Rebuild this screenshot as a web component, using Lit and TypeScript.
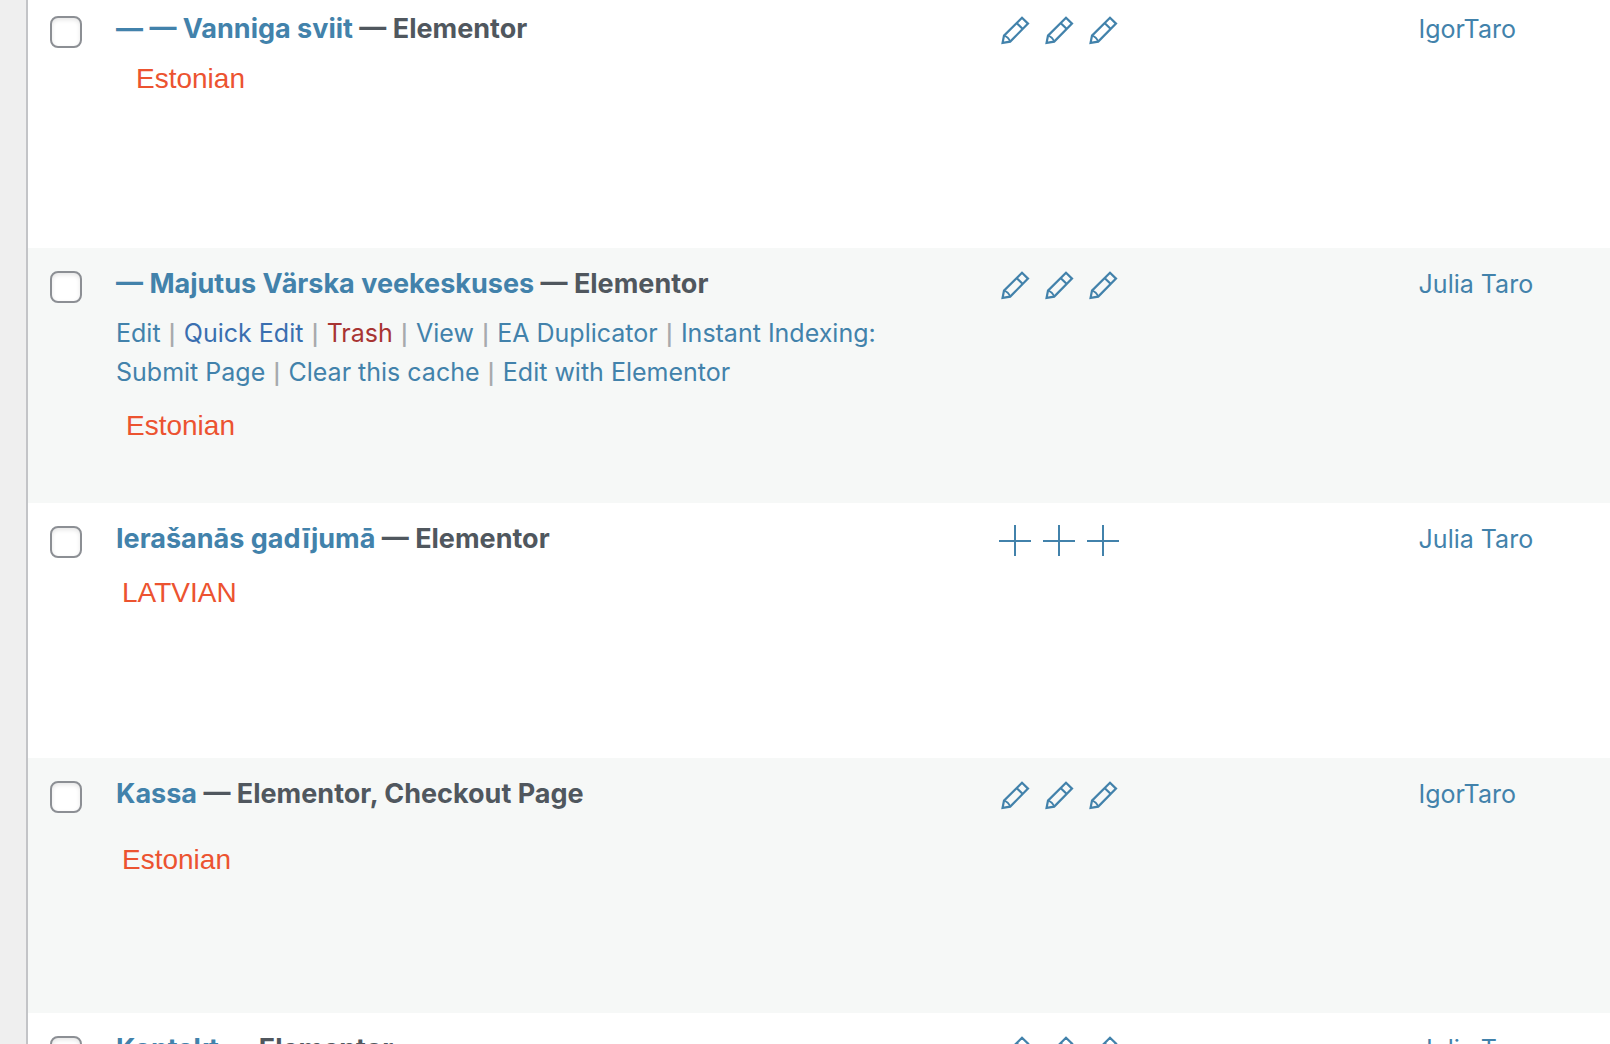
import { LitElement, html, css, svg, nothing } from "lit";
import { customElement, property } from "lit/decorators.js";
import { classMap } from "lit/directives/class-map.js";

type Glyph = "pencil" | "plus";

interface Action {
  label: string;
  kind?: "quick" | "trash";
}

interface PageRow {
  title: string;
  state: string;
  author: string;
  glyph: Glyph;
  actions?: Action[];
  note?: string;
  indent?: "narrow" | "medium" | "wide";
  gap?: "tight" | "normal" | "loose";
}

const ROWS: PageRow[] = [
  {
    title: "— — Vanniga sviit",
    state: "Elementor",
    author: "IgorTaro",
    glyph: "pencil",
    note: "Estonian",
    indent: "wide",
    gap: "tight",
  },
  {
    title: "— Majutus Värska veekeskuses",
    state: "Elementor",
    author: "Julia Taro",
    glyph: "pencil",
    actions: [
      { label: "Edit" },
      { label: "Quick Edit", kind: "quick" },
      { label: "Trash", kind: "trash" },
      { label: "View" },
      { label: "EA Duplicator" },
      { label: "Instant Indexing: Submit Page" },
      { label: "Clear this cache" },
      { label: "Edit with Elementor" },
    ],
    note: "Estonian",
    indent: "medium",
    gap: "normal",
  },
  {
    title: "Ierašanās gadījumā",
    state: "Elementor",
    author: "Julia Taro",
    glyph: "plus",
    note: "LATVIAN",
    indent: "narrow",
    gap: "normal",
  },
  {
    title: "Kassa",
    state: "Elementor, Checkout Page",
    author: "IgorTaro",
    glyph: "pencil",
    note: "Estonian",
    indent: "narrow",
    gap: "loose",
  },
  {
    title: "Kontakt",
    state: "Elementor",
    author: "Julia Taro",
    glyph: "pencil",
  },
];

@customElement("translation-icon")
class TranslationIcon extends LitElement {
  @property() glyph: Glyph = "pencil";

  static styles = css`
    :host {
      display: block;
      width: 32px;
      height: 32px;
    }
    .icon {
      display: block;
      width: 100%;
      height: 100%;
      fill: none;
      stroke: currentColor;
      stroke-width: 2;
    }
  `;

  render() {
    const shape =
      this.glyph === "pencil"
        ? svg`<path stroke-width="2.2" stroke-linejoin="miter" d="M3.6 28.8 L5 21.6 L23 3.8 L29 9.6 L11.2 27.6 Z M17.6 9 L23.8 15"/><path stroke-width="1.8" d="M5 21.6 Q9.4 22.8 11.2 27.6"/>`
        : svg`<path d="M0 17 H32 M16 1 V32"/>`;
    return html`<svg class="icon" viewBox="0 0 32 32" aria-hidden="true">${shape}</svg>`;
  }
}

@customElement("app-root")
class AppRoot extends LitElement {
  static styles = css`
    :host {
      display: block;
      box-sizing: border-box;
      height: 100vh;
      overflow: hidden;
      padding-left: 26px;
      background: #efefef;
      color: #50575e;
      font-family: Inter, "Noto Sans", sans-serif;
      font-size: 25px;
      line-height: 40px;
    }
    .panel {
      border-left: 2px solid #c3c4c7;
      background: #fff;
    }
    .pages {
      width: 100%;
      margin-top: -7px;
      border-collapse: collapse;
      table-layout: fixed;
    }
    .col-check {
      width: 88px;
    }
    .col-languages {
      width: 26.5%;
    }
    .col-author {
      width: 12.1%;
    }
    .row {
      height: 255px;
      background: #fff;
    }
    .row:nth-child(even) {
      background: #f6f8f7;
    }
    .cell {
      padding: 16px 0 0;
      text-align: left;
      vertical-align: top;
      font-weight: 400;
    }
    .cell-check {
      padding: 23px 0 0 22px;
    }
    .cell-title {
      padding-right: 100px;
    }
    .check {
      display: block;
      appearance: none;
      box-sizing: border-box;
      width: 32px;
      height: 32px;
      margin: 0;
      border: 2px solid #8c8f94;
      border-radius: 8px;
      background: #fff;
      box-shadow: inset 0 2px 4px rgba(0, 0, 0, 0.1);
    }
    .check:checked {
      background: #4282ab;
    }
    .heading {
      font-size: 27px;
      font-weight: 700;
    }
    .link {
      color: #4282ab;
      text-decoration: none;
    }
    .link.quick {
      color: #3a6fb0;
    }
    .link.trash {
      color: #a83432;
    }
    .actions {
      margin-top: 10px;
      line-height: 39px;
    }
    .divider {
      margin: 0 1px;
      color: #a7aaad;
      font-size: 20px;
      font-weight: 600;
      line-height: 20px;
    }
    .languages {
      display: flex;
      gap: 12px;
      padding-top: 5px;
    }
    .note {
      color: #ec5330;
      font-family: "Liberation Sans", Arial, sans-serif;
      font-size: 28px;
    }
    .tight {
      margin-top: 10px;
    }
    .normal {
      margin-top: 14px;
    }
    .loose {
      margin-top: 26px;
    }
    .narrow {
      padding-left: 6px;
    }
    .medium {
      padding-left: 10px;
    }
    .wide {
      padding-left: 20px;
    }
  `;

  private renderActions(actions: Action[]) {
    return html`<div class="actions">${actions.map(
      (action, i) =>
        html`${i ? html` <span class="divider">|</span> ` : nothing}<a
            href="#"
            class=${classMap({
              link: true,
              quick: action.kind === "quick",
              trash: action.kind === "trash",
            })}
            >${action.label}</a
          >`
    )}</div>`;
  }

  private renderRow(row: PageRow) {
    return html`
      <tr class="row">
        <td class="cell cell-check">
          <input class="check" type="checkbox" aria-label="Select ${row.title}" />
        </td>
        <th class="cell cell-title" scope="row">
          <div class="heading"><a class="link" href="#">${row.title}</a> — ${row.state}</div>
          ${row.actions ? this.renderActions(row.actions) : nothing}
          ${row.note
            ? html`<div class="note ${row.indent} ${row.gap}">${row.note}</div>`
            : nothing}
        </th>
        <td class="cell">
          <div class="languages">
            ${[1, 2, 3].map(
              (n) => html`<a class="link" href="#" aria-label="Translation ${n}"
                ><translation-icon glyph=${row.glyph}></translation-icon
              ></a>`
            )}
          </div>
        </td>
        <td class="cell"><a class="link" href="#">${row.author}</a></td>
      </tr>
    `;
  }

  render() {
    return html`
      <main class="panel">
        <table class="pages">
          <colgroup>
            <col class="col-check" />
            <col />
            <col class="col-languages" />
            <col class="col-author" />
          </colgroup>
          <tbody>
            ${ROWS.map((row) => this.renderRow(row))}
          </tbody>
        </table>
      </main>
    `;
  }
}
